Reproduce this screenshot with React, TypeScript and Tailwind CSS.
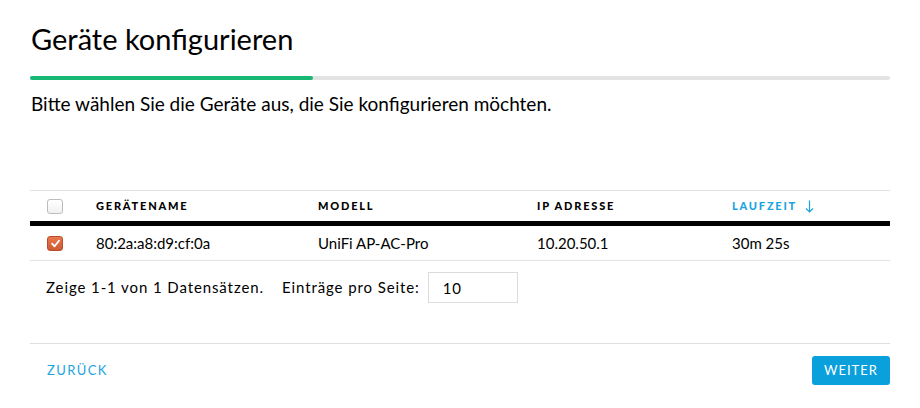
import { useState } from "react";

const COLS = [
  { key: "name", label: "Gerätename", width: "w-[222px]" },
  { key: "model", label: "Modell", width: "w-[219px]" },
  { key: "ip", label: "IP Adresse", width: "w-[195px]" },
];

const ROWS = [{ name: "80:2a:a8:d9:cf:0a", model: "UniFi AP-AC-Pro", ip: "10.20.50.1", uptime: "30m 25s" }];

function Checkbox({ checked }: { checked: boolean }) {
  if (checked) {
    return (
      <span className="flex h-[15px] w-[16px] items-center justify-center rounded-[3px] border border-[#b94d2a] bg-gradient-to-b from-[#e9784f] to-[#cc5a33]">
        <svg className="h-[11px] w-[11px]" viewBox="0 0 12 12" fill="none" stroke="white" strokeWidth={2}>
          <path d="M2.2 6.2 5 9l4.8-6" strokeLinecap="round" strokeLinejoin="round" />
        </svg>
      </span>
    );
  }
  return (
    <span className="block h-[15px] w-[16px] rounded-[3px] border border-[#bdbdbd] bg-gradient-to-b from-white to-[#f1f1f1]" />
  );
}

export default function App() {
  const [perPage, setPerPage] = useState("10");

  return (
    <div
      className="h-[408px] w-[920px] bg-white text-black"
      style={{ fontFamily: "Lato, 'Open Sans', sans-serif" }}
    >
      <div className="px-[30px] pt-[22px]">
        <h1 className="pl-[1px] text-[29px] leading-[34px]">Geräte konfigurieren</h1>

        <div className="mt-[20px] h-[4px] w-[860px] rounded-full bg-[#e3e3e3]">
          <div className="h-[4px] w-[283px] rounded-full bg-[#19b774]" />
        </div>

        <p className="mt-[11px] pl-[1px] text-[19px] leading-[26px]">
          Bitte wählen Sie die Geräte aus, die Sie konfigurieren möchten.
        </p>

        <div className="mt-[73px] w-[860px]">
          <div className="flex h-[31px] items-center border-t border-[#e2e2e2] text-[11px] font-black uppercase tracking-[1.8px]">
            <div className="flex w-[66px] pl-[17px]">
              <Checkbox checked={false} />
            </div>
            {COLS.map((c) => (
              <div key={c.key} className={c.width}>
                {c.label}
              </div>
            ))}
            <div className="flex items-center gap-[8px] text-[#1ba4df]">
              Laufzeit
              <svg className="h-[13px] w-[9px]" viewBox="0 0 9 13" fill="none" stroke="currentColor" strokeWidth={1.2}>
                <path d="M4.5 0.5v11.5M1 8.5l3.5 3.5 3.5-3.5" />
              </svg>
            </div>
          </div>
          <div className="h-[5px] bg-black" />

          {ROWS.map((r) => (
            <div key={r.name} className="flex h-[35px] items-center border-b border-[#e2e2e2] text-[15px]">
              <div className="flex w-[66px] pl-[17px]">
                <Checkbox checked />
              </div>
              <div className="w-[222px]">{r.name}</div>
              <div className="w-[219px]">{r.model}</div>
              <div className="w-[195px]">{r.ip}</div>
              <div>{r.uptime}</div>
            </div>
          ))}

          <div className="mt-[11px] flex items-center pl-[16px] text-[15px] tracking-[0.9px]">
            <span>Zeige 1-1 von 1 Datensätzen.</span>
            <span className="ml-[18px]">Einträge pro Seite:</span>
            <input
              value={perPage}
              onChange={(e) => setPerPage(e.target.value)}
              className="ml-[8px] h-[31px] w-[90px] border border-[#dcdcdc] px-[14px] text-[15px] outline-none"
            />
          </div>
        </div>

        <div className="mt-[40px] w-[860px] border-t border-[#e0e0e0]">
          <div className="flex items-center justify-between pt-[12px]">
            <button className="ml-[17px] text-[13px] uppercase tracking-[1.4px] text-[#1ba4df]">Zurück</button>
            <button className="h-[29px] w-[78px] rounded-[3px] bg-[#0aa0dc] text-[13px] uppercase tracking-[1px] text-white">
              Weiter
            </button>
          </div>
        </div>
      </div>
    </div>
  );
}
